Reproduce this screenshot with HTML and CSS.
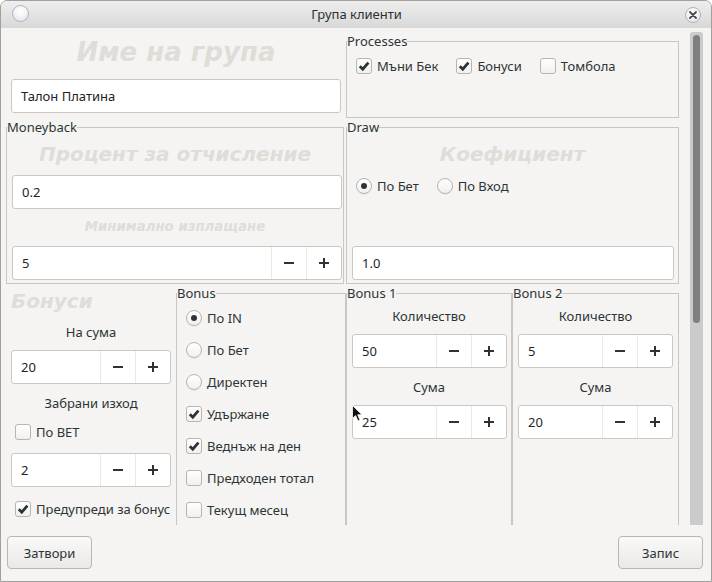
FILE: index.html
```html
<!DOCTYPE html>
<html lang="bg">
<head>
<meta charset="utf-8">
<title>Група клиенти</title>
<link rel="stylesheet" href="styles.css">
</head>
<body>
<div class="window">
  <div class="titlebar">
    <span class="tb-btn tb-menu"></span>
    <span class="title">Група клиенти</span>
    <span class="tb-btn tb-close"><svg width="8" height="8" viewBox="0 0 8 8"><path d="M1 1L7 7M7 1L1 7" stroke="#4a4a4a" stroke-width="1.8" stroke-linecap="round"/></svg></span>
  </div>
  <div class="main">
    <div class="content">
      <div class="row row-top">
        <div class="name-block">
          <div class="ghost ghost-xl">Име на група</div>
          <div class="entry w330">Талон Платина</div>
        </div>
        <fieldset class="group processes">
          <legend>Processes</legend>
          <div class="inline-opts">
            <label class="opt"><span class="check on"><svg width="14" height="14" viewBox="0 0 14 14"><path d="M2.8 7.2L5.8 10.2L11.4 3.6" fill="none" stroke="#2e3436" stroke-width="2.8"/></svg></span>Мъни Бек</label>
            <label class="opt"><span class="check on"><svg width="14" height="14" viewBox="0 0 14 14"><path d="M2.8 7.2L5.8 10.2L11.4 3.6" fill="none" stroke="#2e3436" stroke-width="2.8"/></svg></span>Бонуси</label>
            <label class="opt"><span class="check"></span>Томбола</label>
          </div>
        </fieldset>
      </div>

      <div class="row row-mid">
        <fieldset class="group moneyback">
          <legend>Moneyback</legend>
          <div class="ghost ghost-l mt8">Процент за отчисление</div>
          <div class="entry w330 ml5 mt9">0.2</div>
          <div class="ghost ghost-s mt9">Минимално изплащане</div>
          <div class="spin w330 ml5 mt10">
            <span class="val">5</span>
            <span class="sbtn"><span class="minus"></span></span>
            <span class="sbtn"><span class="plus"></span></span>
          </div>
        </fieldset>
        <fieldset class="group draw">
          <legend>Draw</legend>
          <div class="ghost ghost-l mt8">Коефициент</div>
          <div class="inline-opts radios">
            <label class="opt"><span class="radio on"></span>По Бет</label>
            <label class="opt"><span class="radio"></span>По Вход</label>
          </div>
          <div class="entry w322 ml5 mt50">1.0</div>
        </fieldset>
      </div>

      <div class="row row-bottom">
        <div class="bonus-left">
          <div class="ghost ghost-l left-ghost">Бонуси</div>
          <div class="caption mt10">На сума</div>
          <div class="spin mt9">
            <span class="val">20</span>
            <span class="sbtn"><span class="minus"></span></span>
            <span class="sbtn"><span class="plus"></span></span>
          </div>
          <div class="caption mt10">Забрани изход</div>
          <label class="opt single mt10"><span class="check"></span>По BET</label>
          <div class="spin mt12">
            <span class="val">2</span>
            <span class="sbtn"><span class="minus"></span></span>
            <span class="sbtn"><span class="plus"></span></span>
          </div>
          <label class="opt single mt12"><span class="check on"><svg width="14" height="14" viewBox="0 0 14 14"><path d="M2.8 7.2L5.8 10.2L11.4 3.6" fill="none" stroke="#2e3436" stroke-width="2.8"/></svg></span>Предупреди за бонус</label>
        </div>

        <fieldset class="group bonus">
          <legend>Bonus</legend>
          <div class="stack">
            <label class="opt row32"><span class="radio on"></span>По IN</label>
            <label class="opt row32"><span class="radio"></span>По Бет</label>
            <label class="opt row32"><span class="radio"></span>Директен</label>
            <label class="opt row32"><span class="check on"><svg width="14" height="14" viewBox="0 0 14 14"><path d="M2.8 7.2L5.8 10.2L11.4 3.6" fill="none" stroke="#2e3436" stroke-width="2.8"/></svg></span>Удържане</label>
            <label class="opt row32"><span class="check on"><svg width="14" height="14" viewBox="0 0 14 14"><path d="M2.8 7.2L5.8 10.2L11.4 3.6" fill="none" stroke="#2e3436" stroke-width="2.8"/></svg></span>Веднъж на ден</label>
            <label class="opt row32"><span class="check"></span>Предходен тотал</label>
            <label class="opt row32"><span class="check"></span>Текущ месец</label>
          </div>
        </fieldset>

        <fieldset class="group bonus-n">
          <legend>Bonus 1</legend>
          <div class="caption mt7">Количество</div>
          <div class="spin w155 ml5 mt9">
            <span class="val">50</span>
            <span class="sbtn"><span class="minus"></span></span>
            <span class="sbtn"><span class="plus"></span></span>
          </div>
          <div class="caption mt10">Сума</div>
          <div class="spin w155 ml5 mt9">
            <span class="val">25</span>
            <span class="sbtn"><span class="minus"></span></span>
            <span class="sbtn"><span class="plus"></span></span>
          </div>
        </fieldset>

        <fieldset class="group bonus-n">
          <legend>Bonus 2</legend>
          <div class="caption mt7">Количество</div>
          <div class="spin w155 ml5 mt9">
            <span class="val">5</span>
            <span class="sbtn"><span class="minus"></span></span>
            <span class="sbtn"><span class="plus"></span></span>
          </div>
          <div class="caption mt10">Сума</div>
          <div class="spin w155 ml5 mt9">
            <span class="val">20</span>
            <span class="sbtn"><span class="minus"></span></span>
            <span class="sbtn"><span class="plus"></span></span>
          </div>
        </fieldset>
      </div>
    </div>
    <div class="scrollbar"><div class="thumb"></div></div>
  </div>
  <div class="footer">
    <button class="btn">Затвори</button>
    <button class="btn">Запис</button>
  </div>
  <svg class="cursor" width="12" height="18" viewBox="0 0 12 18"><path d="M0.5 0.5L0.5 13.5L3.6 10.6L6 16L8 15.1L5.7 9.8L10 9.8Z" fill="#111" stroke="#fff" stroke-width="0.8"/></svg>
</div>
</body>
</html>
```

FILE: styles.css
```css
* { box-sizing: border-box; }

body {
  margin: 0;
  background: #ffffff;
  font-family: "Noto Sans", "Open Sans", sans-serif;
  font-size: 13px;
  color: #2e3436;
}

.window {
  position: relative;
  width: 712px;
  height: 582px;
  border: 1px solid #a39f9a;
  border-radius: 7px 7px 0 0;
  background: #f5f4f2;
  display: flex;
  flex-direction: column;
  overflow: hidden;
}

/* ---------- title bar ---------- */
.titlebar {
  flex: none;
  height: 27px;
  background: linear-gradient(#eeeeee, #d8d8d8);
  display: grid;
  grid-template-columns: 1fr auto 1fr;
  align-items: start;
  padding: 0 10px 0 11px;
}
.title {
  line-height: 27px;
  font-size: 13px;
  color: #2f2f2f;
}
.tb-btn {
  display: flex;
  align-items: center;
  justify-content: center;
  border-radius: 50%;
  border: 1.5px solid #a9b3c6;
  background: radial-gradient(circle at 50% 35%, #ffffff 0%, #f4f4f4 45%, #dedede 100%);
}
.tb-menu {
  justify-self: start;
  width: 17px;
  height: 17px;
  margin-top: 4px;
}
.tb-close {
  justify-self: end;
  width: 16px;
  height: 16px;
  margin-top: 6px;
}

/* ---------- main / scroll area ---------- */
.main {
  flex: none;
  height: 497px;
  display: flex;
}
.content {
  flex: 1;
  min-width: 0;
  overflow: hidden;
  padding: 6px 0 0 5px;
  display: flex;
  flex-direction: column;
  gap: 2px;
}
.scrollbar {
  flex: none;
  width: 13px;
  margin: 4px 8px 0 1px;
  padding: 3px;
  background: #cbcbcb;
  border-radius: 3px 3px 0 0;
}
.thumb {
  height: 288px;
  background: #7e8080;
  border-radius: 4px;
}

.row { flex: none; display: grid; }
.row-top { grid-template-columns: 340px 333px; height: 84px; }
.row-mid { grid-template-columns: 340px 333px; height: 164px; }
.row-bottom { grid-template-columns: 170px 170px 166px 167px; height: 280px; }

/* ---------- group boxes ---------- */
.group {
  margin: 0;
  padding: 0;
  min-width: 0;
  border: 1px solid #cbc6c1;
  display: flex;
  flex-direction: column;
}
.group legend {
  padding: 0;
  margin: 0;
  font-size: 13px;
  line-height: 14px;
  color: #2e3436;
}
.moneyback { width: 338px; }

/* ---------- ghost headings ---------- */
.ghost {
  font-family: "DejaVu Sans", sans-serif;
  font-weight: bold;
  font-style: italic;
  color: #e0dcd8;
  text-align: center;
  white-space: nowrap;
}
.ghost-xl { font-size: 26px; line-height: 30px; }
.ghost-l { font-size: 20px; line-height: 24px; }
.ghost-s { font-size: 13.3px; line-height: 18px; }

.name-block {
  padding-top: 3px;
  display: flex;
  flex-direction: column;
}
.name-block .entry { margin: 12px 0 0 5px; }

/* ---------- inputs ---------- */
.entry {
  height: 34px;
  border: 1px solid #cdc7c2;
  border-radius: 3px;
  background: #ffffff;
  display: flex;
  align-items: center;
  padding-left: 9px;
  color: #1f2325;
}
.spin {
  height: 34px;
  border: 1px solid #cdc7c2;
  border-radius: 3px;
  background: #ffffff;
  display: flex;
  color: #1f2325;
}
.spin .val {
  flex: 1;
  display: flex;
  align-items: center;
  padding-left: 9px;
}
.sbtn {
  flex: none;
  width: 35px;
  border-left: 1px solid #ebe9e6;
  display: flex;
  align-items: center;
  justify-content: center;
}
.minus {
  width: 10px;
  height: 2px;
  background: #2e3436;
}
.plus {
  width: 10px;
  height: 10px;
  background:
    linear-gradient(#2e3436, #2e3436) center / 10px 2px no-repeat,
    linear-gradient(#2e3436, #2e3436) center / 2px 10px no-repeat;
}

.w330 { width: 330px; }
.w322 { width: 322px; }
.w155 { width: 155px; }
.ml5 { margin-left: 5px; }
.mt7 { margin-top: 7px; }
.mt8 { margin-top: 8px; }
.mt9 { margin-top: 9px; }
.mt10 { margin-top: 10px; }
.mt12 { margin-top: 12px; }
.mt50 { margin-top: 50px; }

/* ---------- checks & radios ---------- */
.inline-opts {
  display: flex;
  align-items: center;
  gap: 18px;
  height: 19px;
  margin-top: 8px;
  padding-left: 9px;
}
.radios { height: 20px; margin-top: 10px; }
.opt {
  display: flex;
  align-items: center;
  gap: 5px;
  white-space: nowrap;
  line-height: 18px;
}
.check, .radio {
  flex: none;
  width: 16px;
  height: 16px;
  border: 1px solid #b9b4af;
  background: linear-gradient(#ffffff, #f1f0ef);
  display: flex;
  align-items: center;
  justify-content: center;
}
.check { border-radius: 3px; }
.radio { border-radius: 50%; box-shadow: 0 1px 0 rgba(0,0,0,0.06); }
.radio.on::after {
  content: "";
  width: 6px;
  height: 6px;
  border-radius: 50%;
  background: #2e3436;
}

.caption {
  text-align: center;
  line-height: 18px;
  color: #2e3436;
}

/* ---------- bonus columns ---------- */
.bonus-left {
  padding: 0 5px;
  display: flex;
  flex-direction: column;
}
.left-ghost { text-align: left; margin-top: 3px; }
.opt.single { height: 19px; padding-left: 4px; }

.stack {
  margin-top: 2px;
  padding-left: 9px;
  display: flex;
  flex-direction: column;
}
.row32 { height: 32px; }

/* ---------- footer ---------- */
.footer {
  flex: none;
  height: 56px;
  padding: 11px 8px 0 6px;
  display: flex;
  justify-content: space-between;
  align-items: flex-start;
}
.btn {
  width: 85px;
  height: 33px;
  border: 1px solid #bbb6b1;
  border-radius: 4px;
  background: linear-gradient(#f9f9f8, #ebe9e7);
  font-family: "Noto Sans", sans-serif;
  font-size: 13px;
  color: #2e3436;
  padding: 0;
}

.cursor {
  position: absolute;
  left: 351px;
  top: 404px;
}
```
